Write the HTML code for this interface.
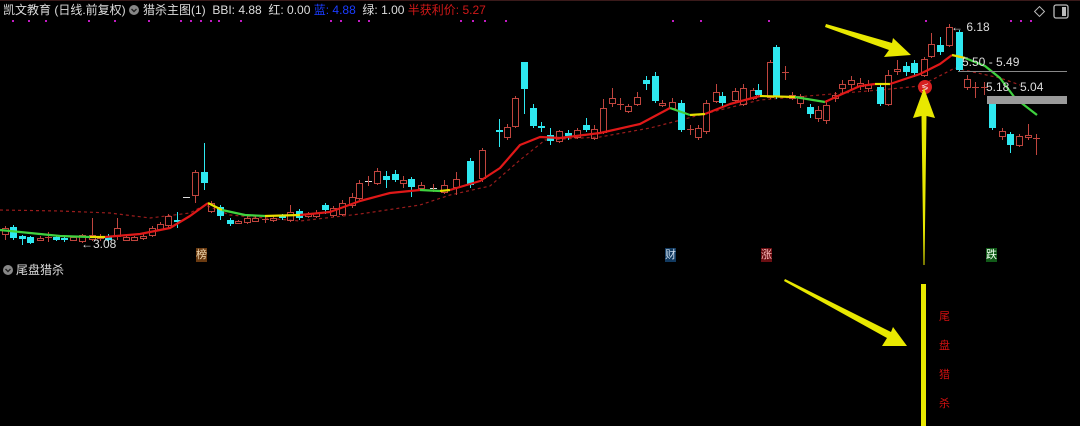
<!DOCTYPE html>
<html><head><meta charset="utf-8"><style>
html,body{margin:0;padding:0;background:#000;width:1080px;height:426px;overflow:hidden}
body{position:relative;font-family:"Liberation Sans","Noto Sans CJK SC",sans-serif}
.t{position:absolute;font-size:12px;white-space:nowrap;line-height:14px}
</style></head><body>
<svg id="s" width="1080" height="426" style="position:absolute;left:0;top:0">
<line x1="0" y1="0.5" x2="1080" y2="0.5" stroke="#3a1a1a"/>
<g id="dots" fill="#c21cc2"></g>
<polyline fill="none" stroke="#9a1c1c" stroke-width="1.2" stroke-dasharray="3,3" points="0,210 60,211 110,213 150,218 190,213 205,205 230,215 300,221 360,214 420,205 450,195 490,186 520,160 545,140 600,137 650,128 700,115 760,100 820,95 880,90 920,86 955,68 1000,78 1020,85"/>
<g id="c"></g>
<g id="ma" fill="none" stroke-width="2.2" stroke-linejoin="round"></g>
<line x1="958" y1="71.5" x2="1067" y2="71.5" stroke="#888"/>
<rect x="987" y="96" width="80" height="8" fill="#9a9a9a"/>
<circle cx="925" cy="87" r="7" fill="#d62020"/>
<text x="925" y="90" font-size="8" fill="#fff" text-anchor="middle">≶</text>
<!-- arrows (tapered) -->
<polygon points="826,24 892,43 893,38 911,55 884,57 889,50 825,27" fill="#e8e800"/>
<polygon points="923.5,265 921.5,116 913,118 924,88 935,118 926.5,116 924.5,265" fill="#e8e800"/>
<polygon points="785,279 891,332 893,327 907,346 882,346 887,338 784,281" fill="#e8e800"/>
<rect x="921" y="284" width="5" height="142" fill="#e8e800"/>
<rect x="1036" y="8" width="7" height="7" fill="none" stroke="#bbb" transform="rotate(45 1039.5 11.5)"/>
<rect x="1054" y="5" width="14" height="13" rx="2" fill="none" stroke="#bbb" stroke-width="1.3"/>
<rect x="1062" y="7" width="4" height="9" fill="#bbb"/>
<circle cx="8" cy="270" r="5" fill="#888"/>
<path d="M5.5 269 L8 271.5 L10.5 269" stroke="#222" stroke-width="1.4" fill="none"/>
<circle cx="134" cy="10" r="5" fill="#888"/>
<path d="M131.5 9 L134 11.5 L136.5 9" stroke="#222" stroke-width="1.4" fill="none"/>
</svg>
<div class="t" style="left:3px;top:3px;color:#ddd">凯文教育 (日线.前复权)</div>
<div class="t" style="left:143px;top:3px;color:#ddd">猎杀主图(1) &nbsp;BBI: 4.88 &nbsp;红: 0.00 <span style="color:#1a3cff">蓝: 4.88</span> &nbsp;绿: 1.00 <span style="color:#d01818">半获利价: 5.27</span></div>
<div class="t" style="left:951px;top:20px;color:#ddd">← 6.18</div>
<div class="t" style="left:962px;top:55px;color:#ddd">5.50 - 5.49</div>
<div class="t" style="left:986px;top:80px;color:#ddd">5.18 - 5.04</div>
<div class="t" style="left:81px;top:237px;color:#ddd">←3.08</div>
<div class="t" style="left:16px;top:263px;color:#ddd">尾盘猎杀</div>
<div class="t" style="left:196px;top:248px;color:#f0d8b0;background:#6a3a10;font-size:11px">榜</div>
<div class="t" style="left:665px;top:248px;color:#cde;background:#123a60;font-size:11px">财</div>
<div class="t" style="left:761px;top:248px;color:#fbb;background:#6a0e12;font-size:11px">涨</div>
<div class="t" style="left:986px;top:248px;color:#efe;background:#115a18;font-size:11px">跌</div>
<div class="t" style="left:939px;top:303px;color:#d01010;font-size:11px;line-height:29px;width:12px;white-space:normal">尾<br>盘<br>猎<br>杀</div>
<script>
var NS="http://www.w3.org/2000/svg";
function el(p,t,a){var e=document.createElementNS(NS,t);for(var k in a)e.setAttribute(k,a[k]);p.appendChild(e);return e}
var d=document.getElementById('dots');
[12,28,45,88,114,148,180,190,200,210,218,240,330,340,358,368,460,472,484,505,672,700,768,925,1010,1020,1030].forEach(function(x){el(d,'rect',{x:x,y:20,width:2,height:2})});
var C=[[5,234,228,226,240],[13,227,238,225,240],[22,236,239,235,245],[30,237,243,236,244],[40,240,238,236,241],[48,237,237,232,242],[56,237,240,236,241],[64,238,239,236,242],[73,240,237,236,241],[82,241,235,234,243],[92,239,235,218,241],[100,238,237,234,241],[108,237,240,234,241],[117,236,228,218,240],[126,240,237,236,241],[134,240,237,236,241],[143,238,236,234,240],[152,235,228,226,237],[160,229,224,222,231],[168,225,216,214,228],[177,220,222,212,228],[186,197,197,197,197],[195,195,172,170,203],[204,172,183,143,190],[211,211,203,201,213],[220,207,216,205,220],[230,220,224,218,226],[238,223,221,220,224],[247,222,218,216,224],[255,221,218,216,222],[265,219,219,215,223],[273,220,218,216,222],[282,216,218,214,220],[290,220,212,205,222],[299,211,218,209,220],[308,216,214,212,218],[316,216,213,210,218],[325,205,210,203,214],[333,215,208,206,217],[342,214,203,200,216],[352,205,197,193,208],[359,198,183,180,200],[368,181,181,176,186],[377,183,171,168,185],[386,176,180,171,188],[395,174,180,170,182],[403,183,180,176,188],[411,179,187,177,197],[421,188,185,182,190],[433,188,188,184,192],[444,192,185,180,194],[456,187,179,172,195],[470,161,185,158,188],[482,178,150,148,182],[499,130,131,119,147],[507,137,127,124,140],[515,126,98,96,128],[524,62,89,62,114],[533,108,126,104,128],[541,126,128,122,132],[550,135,141,128,145],[559,141,131,130,143],[568,133,136,130,140],[577,137,130,128,139],[586,125,130,118,132],[594,138,129,125,140],[603,132,108,99,134],[612,103,98,88,107],[620,104,104,98,110],[628,111,106,104,113],[637,104,97,92,106],[646,80,84,76,90],[655,76,101,72,103],[662,105,103,100,107],[672,108,102,98,110],[681,103,130,100,132],[690,129,129,125,135],[698,137,128,125,140],[706,131,103,100,134],[716,101,92,84,103],[722,96,103,92,106],[735,100,91,88,102],[743,104,88,84,106],[753,98,90,88,100],[758,90,95,84,97],[770,97,62,60,99],[776,47,97,45,99],[785,72,72,66,80],[792,98,95,92,100],[800,103,96,94,108],[810,107,114,104,118],[818,118,110,106,122],[826,120,105,100,124],[835,98,95,92,102],[842,88,84,80,94],[851,84,80,76,90],[860,86,83,78,90],[868,88,84,80,92],[880,87,104,85,106],[888,104,75,70,106],[897,71,69,60,75],[906,66,72,62,76],[914,63,73,60,77],[924,75,59,57,77],[931,56,44,33,58],[940,45,52,37,55],[949,45,27,24,47],[959,32,70,30,72],[967,87,79,75,90],[975,87,87,82,98],[984,87,87,82,95],[992,103,128,101,130],[1002,136,131,128,140],[1010,134,145,132,153],[1019,145,136,134,147],[1028,137,135,124,140],[1036,138,138,134,155]];
var g=document.getElementById('c');
C.forEach(function(a){var x=a[0],o=a[1],c=a[2],h=a[3],l=a[4];
 if(o===c){el(g,'line',{x1:x-3,y1:o+.5,x2:x+4,y2:o+.5,stroke:x==186||x==368||x==433?'#ddd':'#c0453e'});el(g,'line',{x1:x+.5,y1:h,x2:x+.5,y2:l,stroke:'#c0453e'});return;}
 var up=c<o,top=Math.min(o,c),bot=Math.max(o,c);
 if(up){el(g,'line',{x1:x+.5,y1:h,x2:x+.5,y2:top,stroke:'#c0453e'});el(g,'line',{x1:x+.5,y1:bot,x2:x+.5,y2:l,stroke:'#c0453e'});el(g,'rect',{x:x-3+.5,y:top+.5,width:6,height:bot-top,fill:'none',stroke:'#c0453e'});}
 else{el(g,'line',{x1:x+.5,y1:h,x2:x+.5,y2:l,stroke:'#2ee8f0'});el(g,'rect',{x:x-3,y:top,width:7,height:Math.max(bot-top,2),fill:'#2ee8f0'});}
});
var m=document.getElementById('ma');
var segs=[['#3fd23f','0,230 30,233 60,236 90,237'],['#e8e000','90,237 105,237'],['#e01818','105,237 140,234 170,228 190,216 208,203'],['#e8e000','208,203 222,210'],['#3fd23f','222,210 245,215 265,216'],['#e8e000','265,216 300,215'],['#e01818','300,215 330,212 360,201 390,193 420,190'],['#3fd23f','420,190 440,191'],['#e8e000','440,191 450,190'],['#e01818','450,190 480,181 500,168 520,145 540,137 560,138 600,133 640,124 670,108'],['#3fd23f','670,108 690,115'],['#e8e000','690,115 705,114'],['#e01818','705,114 730,104 760,96'],['#e8e000','760,96 795,97'],['#3fd23f','795,97 825,102'],['#e01818','825,102 840,95 860,86 875,84'],['#e8e000','875,84 890,84'],['#e01818','890,84 920,74 940,64 952,55'],['#e8e000','952,55 965,58'],['#3fd23f','965,58 985,66 1000,78 1015,98 1037,115']];
segs.forEach(function(s){el(m,'polyline',{points:s[1],stroke:s[0]})});
</script>
</body></html>
